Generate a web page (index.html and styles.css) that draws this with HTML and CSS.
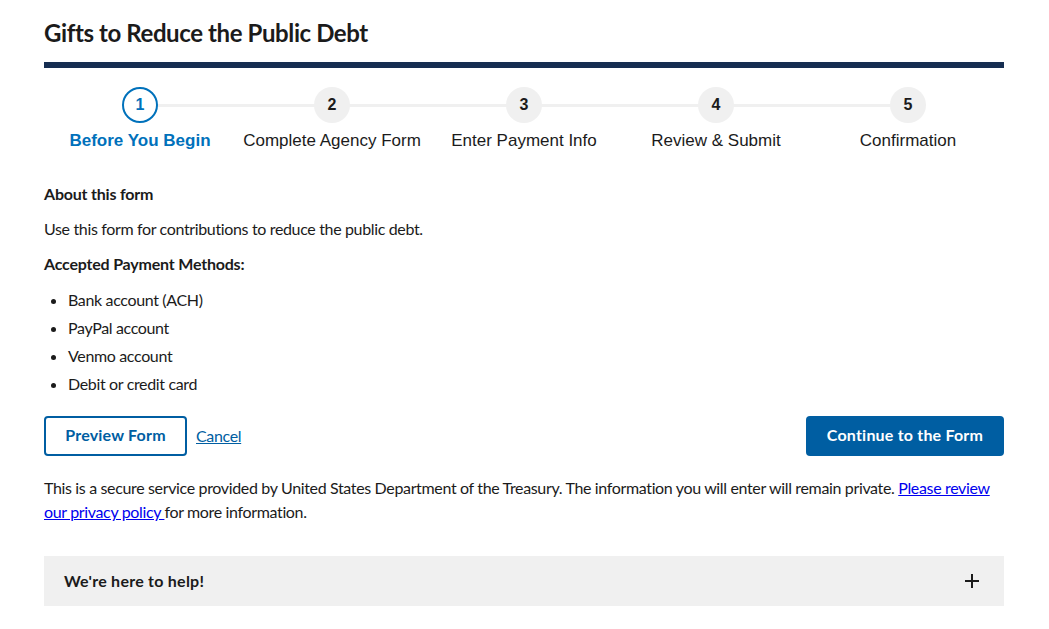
FILE: index.html
```html
<!DOCTYPE html>
<html lang="en">
<head>
<meta charset="utf-8">
<title>Gifts to Reduce the Public Debt</title>
<link rel="stylesheet" href="styles.css">
</head>
<body>
<main class="page">
  <h1 class="title">Gifts to Reduce the Public Debt</h1>
  <div class="rule"></div>

  <ol class="stepper">
    <li class="step active"><span class="circle">1</span><span class="label">Before You Begin</span></li>
    <li class="step"><span class="circle">2</span><span class="label">Complete Agency Form</span></li>
    <li class="step"><span class="circle">3</span><span class="label">Enter Payment Info</span></li>
    <li class="step"><span class="circle">4</span><span class="label">Review &amp; Submit</span></li>
    <li class="step last"><span class="circle">5</span><span class="label">Confirmation</span></li>
  </ol>

  <section class="content">
    <h2 class="heading">About this form</h2>
    <p class="text">Use this form for contributions to reduce the public debt.</p>
    <h2 class="heading">Accepted Payment Methods:</h2>
    <ul class="methods">
      <li>Bank account (ACH)</li>
      <li>PayPal account</li>
      <li>Venmo account</li>
      <li>Debit or credit card</li>
    </ul>
  </section>

  <div class="actions">
    <div class="actions-left">
      <button class="btn btn-outline" type="button">Preview Form</button>
      <a class="cancel" href="#">Cancel</a>
    </div>
    <button class="btn btn-primary" type="button">Continue to the Form</button>
  </div>

  <p class="notice">This is a secure service provided by United States Department of the Treasury. The information you will enter will remain private. <a class="privacy" href="#">Please review our privacy policy </a>for more information.</p>

  <div class="accordion">
    <span class="accordion-title">We're here to help!</span>
    <svg class="plus" width="16" height="16" viewBox="0 0 16 16" aria-hidden="true">
      <path d="M8 1v14M1 8h14" stroke="#1b1b1b" stroke-width="2" fill="none"/>
    </svg>
  </div>
</main>
</body>
</html>
```
FILE: styles.css
```css
* { box-sizing: border-box; }

body {
  margin: 0;
  background: #ffffff;
  color: #1b1b1b;
  font-family: "Lato", "Liberation Sans", sans-serif;
  font-size: 16px;
  letter-spacing: -0.35px;
}

.page {
  width: 960px;
  margin-left: 44px;
  padding-top: 18px;
}

.title {
  margin: 0;
  font-size: 24px;
  line-height: 30px;
  font-weight: 700;
  letter-spacing: -0.4px;
}

.rule {
  margin-top: 14px;
  height: 6px;
  background: #162e51;
}

.stepper {
  list-style: none;
  margin: 19px 0 0;
  padding: 0;
  display: flex;
  letter-spacing: 0;
}

.step {
  flex: 1;
  display: flex;
  flex-direction: column;
  align-items: center;
  position: relative;
  font-family: "Liberation Sans", Arial, sans-serif;
}

.step::before {
  content: "";
  position: absolute;
  top: 17px;
  left: 50%;
  width: 100%;
  height: 3px;
  background: #f0f0f0;
}

.step.last::before { display: none; }

.circle {
  position: relative;
  width: 36px;
  height: 36px;
  border-radius: 50%;
  background: #f0f0f0;
  display: flex;
  align-items: center;
  justify-content: center;
  font-weight: 700;
  font-size: 16px;
  color: #1b1b1b;
}

.step.active .circle {
  background: #ffffff;
  border: 2px solid #0071bb;
  color: #0071bb;
}

.label {
  margin-top: 8px;
  font-size: 17px;
  line-height: 20px;
  color: #1b1b1b;
}

.step.active .label {
  color: #0071bb;
  font-weight: 700;
}

.content {
  margin-top: 31px;
}

.heading {
  margin: 0 0 11px;
  font-size: 16px;
  line-height: 24px;
  font-weight: 700;
  letter-spacing: -0.2px;
}

.text {
  margin: 0 0 11px;
  line-height: 24px;
}

.methods {
  margin: 12px 0 0;
  padding-left: 24px;
}

.methods li {
  line-height: 24px;
  margin-bottom: 4px;
}

.methods li:last-child { margin-bottom: 0; }

.actions {
  margin-top: 20px;
  display: flex;
  justify-content: space-between;
  align-items: center;
}

.actions-left {
  display: flex;
  align-items: center;
  gap: 9px;
}

.btn {
  height: 40px;
  border-radius: 4px;
  font-family: "Lato", "Liberation Sans", sans-serif;
  font-size: 16px;
  font-weight: 700;
  letter-spacing: 0.2px;
  padding: 0 0 3px;
  cursor: pointer;
}

.btn-outline {
  width: 143px;
  background: #ffffff;
  color: #005ea2;
  border: 2px solid #005ea2;
}

.btn-primary {
  width: 198px;
  background: #005ea2;
  color: #ffffff;
  border: 0;
}

.cancel {
  color: #005ea2;
  text-decoration: underline;
  line-height: 24px;
}

.notice {
  margin: 20px 0 0;
  line-height: 24px;
}

.privacy {
  color: #0000ee;
}

.accordion {
  margin-top: 32px;
  height: 50px;
  background: #f0f0f0;
  display: flex;
  align-items: center;
  justify-content: space-between;
  padding: 0 24px 2px 20px;
}

.accordion-title {
  font-weight: 700;
  font-size: 16px;
  letter-spacing: 0.25px;
}

.plus { display: block; margin-top: 2px; }
```
